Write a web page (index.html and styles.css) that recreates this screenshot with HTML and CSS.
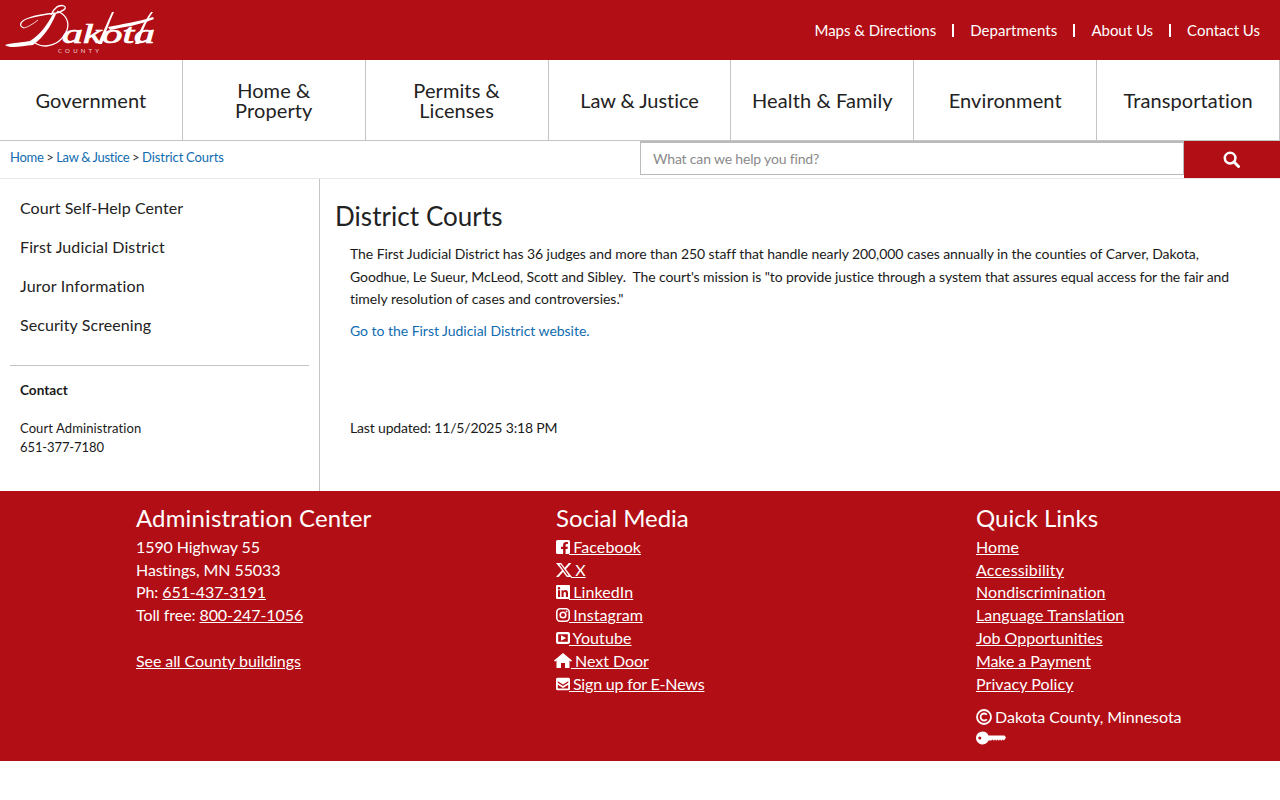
FILE: index.html
```html
<!DOCTYPE html>
<html lang="en">
<head>
<meta charset="utf-8">
<title>District Courts</title>
<link rel="stylesheet" href="styles.css">
</head>
<body>
<header class="topbar">
  <a class="logo" href="#">
    <svg class="logo-art" width="160" height="60" viewBox="0 0 160 60" role="img" aria-label="Dakota County">
      <path class="brush" d="M53 14 C47 25 40 35 30 41 C22 43 14 42 5 45 C10 49 22 46 33 45 C44 37 51 26 56 14 Z"/>
      <path class="swash" d="M24 28 C18 26 20 21 29 18 C38 15 47 14 56 13 C62 12 68 8 64 6 C59 4 54 8 51 15 M57 11 C65 14 70 21 67 30 C63 40 55 45 46 46 C42 46 38 45 35 43"/>
      <path class="swash thin" d="M24 28 C28 27 33 24 38 20"/>
      <text class="logo-word" x="62" y="43" textLength="93" lengthAdjust="spacingAndGlyphs">akota</text>
      <path class="brush" d="M108 27 C122 24 138 22 153 17 L154 19 C140 25 124 27 110 30 Z"/>
      <path class="brush" d="M112 12 L114 12 C109 23 105 34 102 44 L98 44 C102 34 107 23 112 12 Z"/>
      <path class="brush" d="M151 12 L153 12 C146 22 141 33 139 44 L135 44 C138 33 144 22 151 12 Z"/>
      <text class="logo-county" x="58" y="52.500">COUNTY</text>
    </svg>
  </a>
  <nav class="toplinks">
    <a href="#">Maps &amp; Directions</a><span class="sep"></span>
    <a class="dept" href="#">Departments</a><span class="sep"></span>
    <a href="#">About Us</a><span class="sep"></span>
    <a href="#">Contact Us</a>
  </nav>
</header>
<nav class="mainnav">
  <a href="#">Government</a>
  <a href="#">Home &amp;<br>Property</a>
  <a href="#">Permits &amp;<br>Licenses</a>
  <a href="#">Law &amp; Justice</a>
  <a href="#">Health &amp; Family</a>
  <a href="#">Environment</a>
  <a href="#">Transportation</a>
</nav>
<div class="crumbrow">
  <div class="crumbs"><a href="#">Home</a> &gt; <a href="#">Law &amp; Justice</a> &gt; <a href="#">District Courts</a></div>
  <form class="search">
    <input class="search-input" type="text" placeholder="What can we help you find?">
    <button class="search-btn" type="button" aria-label="Search">
      <svg width="17" height="17" viewBox="0 0 16 16"><circle cx="6.700" cy="6.700" r="5" fill="none" stroke="#fff" stroke-width="2.400"/><path d="M10.400 10.400 L14.600 14.600" stroke="#fff" stroke-width="2.800" stroke-linecap="round"/></svg>
    </button>
  </form>
</div>
<div class="content">
  <aside class="sidebar">
    <ul class="sidenav">
      <li><a href="#">Court Self-Help Center</a></li>
      <li><a href="#">First Judicial District</a></li>
      <li><a href="#">Juror Information</a></li>
      <li><a href="#">Security Screening</a></li>
    </ul>
    <div class="contact">
      <h2>Contact</h2>
      <p>Court Administration<br><span class="phone">651-377-7180</span></p>
    </div>
  </aside>
  <main class="main">
    <h1>District Courts</h1>
    <div class="body">
      <p class="intro"><span class="l1">The First Judicial District has 36 judges and more than 250 staff that handle nearly 200,000 cases annually in the counties of Carver, Dakota,</span> <span class="l2">Goodhue, Le Sueur, McLeod, Scott and Sibley.&nbsp; The court's mission is "to provide justice through a system that assures equal access for the fair and</span> <span class="l3">timely resolution of cases and controversies."</span></p>
      <p class="golink"><a href="#">Go to the First Judicial District website.</a></p>
      <p class="updated">Last updated: 11/5/2025 3:18 PM</p>
    </div>
  </main>
</div>
<footer class="footer">
  <section class="fcol addr">
    <h3>Administration Center</h3>
    <div>1590 Highway 55</div>
    <div>Hastings, MN 55033</div>
    <div>Ph: <a href="#">651-437-3191</a></div>
    <div>Toll free: <a href="#">800-247-1056</a></div>
    <div class="gap"><a href="#">See all County buildings</a></div>
  </section>
  <section class="fcol social">
    <h3>Social Media</h3>
    <div><a href="#"><svg class="ico" viewBox="0 0 14 14"><path d="M1.500 0h11A1.500 1.500 0 0 1 14 1.500v11a1.500 1.500 0 0 1-1.500 1.500H9.600V9h1.900l.4-2.300H9.600V5.300c0-.7.3-1.200 1.300-1.200h1V2.100c-.5-.1-1.100-.2-1.700-.2-1.900 0-3.100 1.100-3.100 3.100v1.700H5V9h2.100v5H1.500A1.500 1.500 0 0 1 0 12.500v-11A1.500 1.500 0 0 1 1.500 0z"/></svg> Facebook</a></div>
    <div><a href="#"><svg class="ico ico-x" viewBox="0 0 16 14"><path d="M0 0h5.200l3.500 4.700L12.800 0h2.600L9.900 6.300 16 14h-5.200L7 9 2.600 14H0l6-6.700zM3.400 1.500l8 11h1.400L4.800 1.500z"/></svg> X</a></div>
    <div><a href="#"><svg class="ico" viewBox="0 0 14 14"><path fill-rule="evenodd" d="M1 0h12a1 1 0 0 1 1 1v12a1 1 0 0 1-1 1H1a1 1 0 0 1-1-1V1a1 1 0 0 1 1-1zM2 5.300v6.700h2.100V5.300zM3 2a1.200 1.200 0 1 0 0 2.500A1.200 1.200 0 0 0 3 2zM5.500 5.300V12h2.100V8.600c0-1 .4-1.600 1.200-1.600s1.100.6 1.100 1.500V12H12V8.100c0-1.900-1-3-2.500-3-.9 0-1.600.4-2 1.100v-.9z"/></svg> LinkedIn</a></div>
    <div><a href="#"><svg class="ico" viewBox="0 0 14 14"><rect x=".8" y=".8" width="12.400" height="12.400" rx="3.400" fill="none" stroke="#fff" stroke-width="1.600"/><circle cx="7" cy="7" r="2.800" fill="none" stroke="#fff" stroke-width="1.600"/><circle cx="10.600" cy="3.400" r=".9"/></svg> Instagram</a></div>
    <div><a href="#"><svg class="ico" viewBox="0 0 14 14"><path fill-rule="evenodd" d="M2 1h10a2 2 0 0 1 2 2v8a2 2 0 0 1-2 2H2a2 2 0 0 1-2-2V3a2 2 0 0 1 2-2zM2.200 3.200v7.600h9.600V3.200zM5 4.300 10.200 7 5 9.700z"/></svg> Youtube</a></div>
    <div class="nudge"><a href="#"><svg class="ico ico-home" viewBox="0 0 18 15"><path d="M9 0 18 7.600 17 8.800 15.500 7.600V15H11V10H7V15H2.500V7.600L1 8.800 0 7.600z"/></svg> Next Door</a></div>
    <div class="tight"><a href="#"><svg class="ico" viewBox="0 0 14 14"><path fill-rule="evenodd" d="M1.500 .8h11A1.500 1.500 0 0 1 14 2.300v9.400a1.500 1.500 0 0 1-1.500 1.500h-11A1.500 1.500 0 0 1 0 11.700V2.300A1.500 1.500 0 0 1 1.500 .8zM1.800 4.200v1.500L7 9l5.200-3.300V4.200L7 7.500zM1.800 7.700v3.800h10.400V7.700L7 11z"/></svg> Sign up for E-News</a></div>
  </section>
  <section class="fcol links">
    <h3>Quick Links</h3>
    <div><a href="#">Home</a></div>
    <div><a href="#">Accessibility</a></div>
    <div><a href="#">Nondiscrimination</a></div>
    <div><a href="#">Language Translation</a></div>
    <div><a href="#">Job Opportunities</a></div>
    <div><a href="#">Make a Payment</a></div>
    <div><a href="#">Privacy Policy</a></div>
    <div class="copy"><svg class="ico" viewBox="0 0 16 16"><circle cx="8" cy="8" r="7" fill="none" stroke="#fff" stroke-width="1.800"/><path d="M10.800 10.200A3.500 3.500 0 1 1 10.800 5.800" fill="none" stroke="#fff" stroke-width="1.800"/></svg> Dakota County, Minnesota</div>
    <div class="keyline"><svg class="key" width="30" height="14" viewBox="0 0 30 14"><path fill-rule="evenodd" d="M6.500 .5A6.500 6.500 0 0 1 12.500 4.500H28.500L30 6.500 28 9.500 26.500 8.500 25.300 9.800 24 8.500 22.800 9.800 21.500 8.500 20.300 9.800 19 8.500 17.800 9.800 16.500 8.500 15.300 9.500H12.500A6.500 6.500 0 1 1 6.500 .5zM3.800 5.500a1.500 1.500 0 1 0 0 3 1.500 1.500 0 0 0 0-3z"/></svg></div>
  </section>
</footer>
</body>
</html>
```
FILE: styles.css
```css
* { box-sizing: border-box; }
html, body { margin: 0; padding: 0; }
body { font-family: Lato, "Liberation Sans", sans-serif; color: #1a1a1a; background: #fff; font-size: 14px; }
a { color: inherit; }

.topbar { height: 60px; background: #b20e15; display: flex; justify-content: space-between; align-items: center; padding-right: 20px; overflow: hidden; }
.logo { display: block; height: 60px; }
.logo-art { display: block; }
.swash { fill: none; stroke: #fff; stroke-width: 1.300; }
.swash.thin { stroke-width: .8; }
.brush { fill: #fff; }
.logo-word { font-family: "Liberation Serif", serif; font-style: italic; font-size: 27px; fill: #fff; stroke: #fff; stroke-width: .7; }
.logo-county { font-family: Lato, sans-serif; font-size: 6px; letter-spacing: 3.200px; fill: #f3d5d5; }
.toplinks { display: flex; align-items: center; color: #fff; font-size: 15px; letter-spacing: -0.01px; }
.toplinks a { text-decoration: none; }
.toplinks .dept { letter-spacing: .08px; }
.sep { width: 2px; height: 13px; background: #fff; margin: 0 16px; }

.mainnav { height: 81px; display: grid; grid-template-columns: repeat(7, 1fr); border-bottom: 1px solid #c4c4c4; }
.mainnav a { display: flex; align-items: center; justify-content: center; text-align: center; text-decoration: none; font-size: 20px; line-height: 20px; color: #222; border-right: 1px solid #c4c4c4; letter-spacing: .1px; }
.mainnav a:nth-child(4) { letter-spacing: -0.05px; }

.crumbrow { height: 38px; display: flex; justify-content: space-between; border-bottom: 1px solid #e8e8e8; }
.crumbs { padding: 8px 0 0 10px; font-size: 13px; letter-spacing: -0.29px; word-spacing: -0.3px; color: #333; }
.crumbs a { color: #0f6cb0; text-decoration: none; }
.crumbs a:last-child { letter-spacing: -0.1px; }
.search { width: 640px; display: flex; }
.search-input { flex: 1; height: 34px; border: 1px solid #bbb; border-top-width: 2px; padding: 0 12px; font: 14px Lato, sans-serif; letter-spacing: -0.17px; outline: none; }
.search-input::placeholder { color: #8a8a8a; opacity: 1; }
.search-btn { width: 96px; height: 37px; border: 0; background: #b20e15; display: flex; align-items: center; justify-content: center; padding: 0 1px 0 0; }

.content { display: flex; height: 312px; }
.sidebar { width: 320px; border-right: 1px solid #c4c4c4; padding: 10px 10px 0 10px; }
.sidenav { list-style: none; margin: 0; padding: 0 0 20px; border-bottom: 1px solid #c4c4c4; width: 299px; }
.sidenav li { height: 39px; display: flex; align-items: center; padding: 0 0 2px 10px; font-size: 16px; letter-spacing: .08px; }
.sidenav li:nth-child(2) { letter-spacing: .12px; }
.sidenav li:nth-child(3) { letter-spacing: .2px; }
.sidenav a { text-decoration: none; color: #222; }
.contact { padding: 16px 0 0 10px; }
.contact h2 { margin: 0 0 20px; font-size: 13.600px; line-height: 17px; font-weight: 700; }
.contact p { margin: 0; font-size: 13px; line-height: 19px; letter-spacing: .1px; }
.contact .phone { letter-spacing: -0.1px; }

.main { flex: 1; padding: 19px 30px 0 15px; }
.main h1 { margin: 0 0 9.300px; font-weight: 400; font-size: 26px; line-height: 36px; color: #222; letter-spacing: .05px; }
.body { padding-left: 15px; font-size: 14px; }
.intro { margin: 0 0 9.700px; line-height: 22.400px; }
.intro span { display: block; }
.l1 { letter-spacing: -0.07px; }
.l2 { letter-spacing: -0.095px; }
.l3 { letter-spacing: -0.017px; }
.golink { margin: 0; line-height: 22px; letter-spacing: -0.03px; }
.golink a { color: #0f6cb0; text-decoration: none; }
.updated { margin: 75px 0 0; line-height: 22px; letter-spacing: -0.16px; }

.footer { height: 270px; background: #b20e15; color: #fff; display: grid; grid-template-columns: 420px 420px 1fr; padding: 10px 0 0 136px; font-size: 16px; line-height: 22.860px; }
.fcol h3 { margin: 0 0 .72px; font-weight: 400; font-size: 24px; line-height: 34px; }
.addr h3 { letter-spacing: .14px; }
.social h3 { letter-spacing: -0.05px; }
.fcol a { color: #fff; text-decoration: underline; }
.addr div { letter-spacing: -0.08px; }
.social div { letter-spacing: .1px; }
.links div { letter-spacing: .07px; }
.links div:nth-of-type(2) { letter-spacing: .15px; }
.links div:nth-of-type(5) { letter-spacing: 0; }
.links div:nth-of-type(6) { letter-spacing: -0.1px; }
.gap { margin-top: 23px; }
.ico { width: 14px; height: 14px; fill: #fff; vertical-align: -1px; margin-right: -1px; }
.ico-x { width: 16px; }
.ico-home { width: 18px; height: 15px; vertical-align: -1px; }
.social .nudge { margin-left: -2px; letter-spacing: -0.05px; }
.social .tight { letter-spacing: -0.18px; }
.copy { margin-top: 10px; }
.copy .ico { width: 16px; height: 16px; vertical-align: -2px; margin-right: -1px; }
.links .copy { letter-spacing: -0.03px; }
.keyline { line-height: 14px; margin-top: 2.500px; }
.key { fill: #fff; display: block; }
```
